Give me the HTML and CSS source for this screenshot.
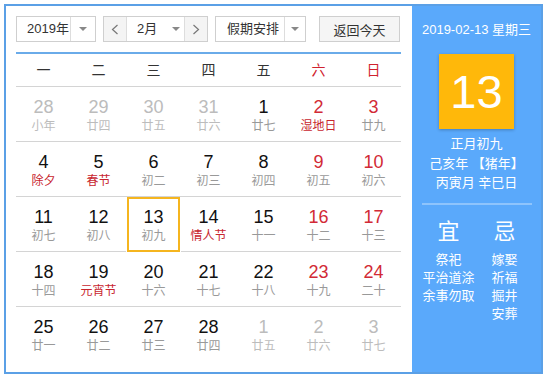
FILE: index.html
```html
<!DOCTYPE html>
<html lang="zh-CN">
<head>
    <meta charset="UTF-8">
    <title>万年历</title>
    <link rel="stylesheet" href="styles.css">
</head>
<body>

    <div class="calendar">
        <div class="main">
            <!-- 工具栏 -->
            <div class="toolbar">
                <div class="select select-year">
                    <span class="select-text">2019年</span>
                    <span class="select-arrow"><i class="caret"></i></span>
                </div>
                <div class="month-group">
                    <span class="nav-btn">
                        <svg width="8" height="11" viewBox="0 0 8 11"><polyline points="6.5,1 1.5,5.5 6.5,10" fill="none" stroke="#777" stroke-width="1.2"/></svg>
                    </span>
                    <span class="month-text">2月<i class="caret"></i></span>
                    <span class="nav-btn nav-next">
                        <svg width="8" height="11" viewBox="0 0 8 11"><polyline points="1.5,1 6.5,5.5 1.5,10" fill="none" stroke="#777" stroke-width="1.2"/></svg>
                    </span>
                </div>
                <div class="select select-holiday">
                    <span class="select-text">假期安排</span>
                    <span class="select-arrow"><i class="caret"></i></span>
                </div>
                <button type="button" class="btn-today">返回今天</button>
            </div>

            <!-- 星期 -->
            <div class="week">
                <span>一</span><span>二</span><span>三</span><span>四</span><span>五</span>
                <span class="red">六</span><span class="red">日</span>
            </div>

            <!-- 日期 -->
            <div class="days">
                <div class="day other"><b>28</b><em>小年</em></div>
                <div class="day other"><b>29</b><em>廿四</em></div>
                <div class="day other"><b>30</b><em>廿五</em></div>
                <div class="day other"><b>31</b><em>廿六</em></div>
                <div class="day"><b>1</b><em>廿七</em></div>
                <div class="day weekend fest"><b>2</b><em>湿地日</em></div>
                <div class="day weekend"><b>3</b><em>廿九</em></div>

                <div class="day fest"><b>4</b><em>除夕</em></div>
                <div class="day fest"><b>5</b><em>春节</em></div>
                <div class="day"><b>6</b><em>初二</em></div>
                <div class="day"><b>7</b><em>初三</em></div>
                <div class="day"><b>8</b><em>初四</em></div>
                <div class="day weekend"><b>9</b><em>初五</em></div>
                <div class="day weekend"><b>10</b><em>初六</em></div>

                <div class="day"><b>11</b><em>初七</em></div>
                <div class="day"><b>12</b><em>初八</em></div>
                <div class="day today"><b>13</b><em>初九</em></div>
                <div class="day fest"><b>14</b><em>情人节</em></div>
                <div class="day"><b>15</b><em>十一</em></div>
                <div class="day weekend"><b>16</b><em>十二</em></div>
                <div class="day weekend"><b>17</b><em>十三</em></div>

                <div class="day"><b>18</b><em>十四</em></div>
                <div class="day fest"><b>19</b><em>元宵节</em></div>
                <div class="day"><b>20</b><em>十六</em></div>
                <div class="day"><b>21</b><em>十七</em></div>
                <div class="day"><b>22</b><em>十八</em></div>
                <div class="day weekend"><b>23</b><em>十九</em></div>
                <div class="day weekend"><b>24</b><em>二十</em></div>

                <div class="day last"><b>25</b><em>廿一</em></div>
                <div class="day last"><b>26</b><em>廿二</em></div>
                <div class="day last"><b>27</b><em>廿三</em></div>
                <div class="day last"><b>28</b><em>廿四</em></div>
                <div class="day last other"><b>1</b><em>廿五</em></div>
                <div class="day last other"><b>2</b><em>廿六</em></div>
                <div class="day last other"><b>3</b><em>廿七</em></div>
            </div>
        </div>

        <!-- 右侧详情 -->
        <div class="side">
            <p class="side-date">2019-02-13 星期三</p>
            <div class="side-day">13</div>
            <div class="side-lunar">
                <p>正月初九</p>
                <p>己亥年 【猪年】</p>
                <p>丙寅月 辛巳日</p>
            </div>
            <div class="side-line"></div>
            <div class="almanac">
                <div class="almanac-col">
                    <h2>宜</h2>
                    <p>祭祀</p>
                    <p>平治道涂</p>
                    <p>余事勿取</p>
                </div>
                <div class="almanac-col">
                    <h2>忌</h2>
                    <p>嫁娶</p>
                    <p>祈福</p>
                    <p>掘井</p>
                    <p>安葬</p>
                </div>
            </div>
        </div>
    </div>

</body>
</html>
```

FILE: styles.css
```css
* {margin: 0; padding: 0; box-sizing: border-box; font-family: 'Liberation Sans', 'Noto Sans CJK SC', sans-serif;}

body {
    background: #fff;
}

.calendar {
    margin: 4px;
    width: 539px;
    height: 370px;
    border: 2px solid #5ba0e6;
    display: flex;
}

.main {
    flex: 1;
    padding: 10px 11px 0 10px;
}

/* 工具栏 */
.toolbar {
    display: flex;
    height: 26px;
    margin-bottom: 10px;
    font-size: 13px;
    color: #333;
}

.select, .month-group {
    display: flex;
    border: 1px solid #cfcfcf;
    background: #fff;
}

.select-year { width: 80px; }

.select-holiday { width: 91px; margin-left: 7px; }

.select-text {
    flex: 1;
    line-height: 24px;
    padding-left: 10px;
}

.select-holiday .select-text { padding-left: 11px; }

.select-arrow {
    width: 25px;
    border-left: 1px solid #ddd;
    display: flex;
    justify-content: center;
    align-items: center;
}

.select-holiday .select-arrow { width: 21px; }

.caret {
    display: inline-block;
    width: 0;
    height: 0;
    border-left: 4px solid transparent;
    border-right: 4px solid transparent;
    border-top: 4px solid #888;
}

.month-group {
    width: 105px;
    margin-left: 7px;
}

.nav-btn {
    width: 23px;
    background: #f4f4f4;
    border-right: 1px solid #ddd;
    display: flex;
    justify-content: center;
    align-items: center;
}

.nav-btn.nav-next {
    border-right: none;
    border-left: 1px solid #ddd;
}

.month-text {
    flex: 1;
    line-height: 24px;
    padding-left: 10px;
    display: flex;
    align-items: center;
}

.month-text .caret { margin-left: 15px; }

.btn-today {
    width: 81px;
    margin-left: 13px;
    border: 1px solid #cfcfcf;
    background: #f5f5f5;
    font-size: 13px;
    color: #333;
}

/* 星期 */
.week {
    display: grid;
    grid-template-columns: repeat(7, 55px);
    height: 35px;
    border-top: 2px solid #6aabe9;
    border-bottom: 1px solid #d4d4d4;
    font-size: 14px;
    color: #333;
    text-align: center;
    line-height: 32px;
}

.red { color: #d0222e; }

/* 日期 */
.days {
    display: grid;
    grid-template-columns: repeat(7, 55px);
}

.day {
    height: 55px;
    padding-top: 9px;
    border-bottom: 1px solid #d4d4d4;
    text-align: center;
}

.day.last { border-bottom: none; }

.day b {
    display: block;
    font-weight: normal;
    font-size: 18px;
    line-height: 22px;
    color: #111;
}

.day em {
    display: block;
    font-style: normal;
    font-size: 12px;
    line-height: 16px;
    color: #999;
}

.day.weekend b { color: #d22a36; }

.day.fest em { color: #c8262f; }

.day.other b, .day.other em { color: #bcbcbc; }

.day.today {
    margin: 0 1px;
    padding-top: 7px;
    border: 2px solid #f5b51f;
}

/* 右侧 */
.side {
    width: 129px;
    background: #5aa9fb;
    color: #fff;
    text-align: center;
    padding-top: 14px;
}

.side-date {
    font-size: 13px;
    line-height: 20px;
}

.side-day {
    width: 75px;
    height: 75px;
    margin: 14px auto 0;
    background: #ffb80a;
    box-shadow: 0 1px 3px rgba(0,0,0,0.25);
    font-size: 47px;
    line-height: 75px;
}

.side-lunar {
    margin-top: 5px;
    font-size: 13px;
    line-height: 19.5px;
}

.side-line {
    width: 110px;
    height: 2px;
    margin: 10px auto 0;
    background: #8ec4fc;
}

.almanac {
    display: grid;
    grid-template-columns: 56px 56px;
    justify-content: center;
    margin-top: 14px;
}

.almanac-col h2 {
    font-size: 22px;
    font-weight: normal;
    line-height: 26px;
    margin-bottom: 6px;
}

.almanac-col p {
    font-size: 13px;
    line-height: 18px;
}
```
